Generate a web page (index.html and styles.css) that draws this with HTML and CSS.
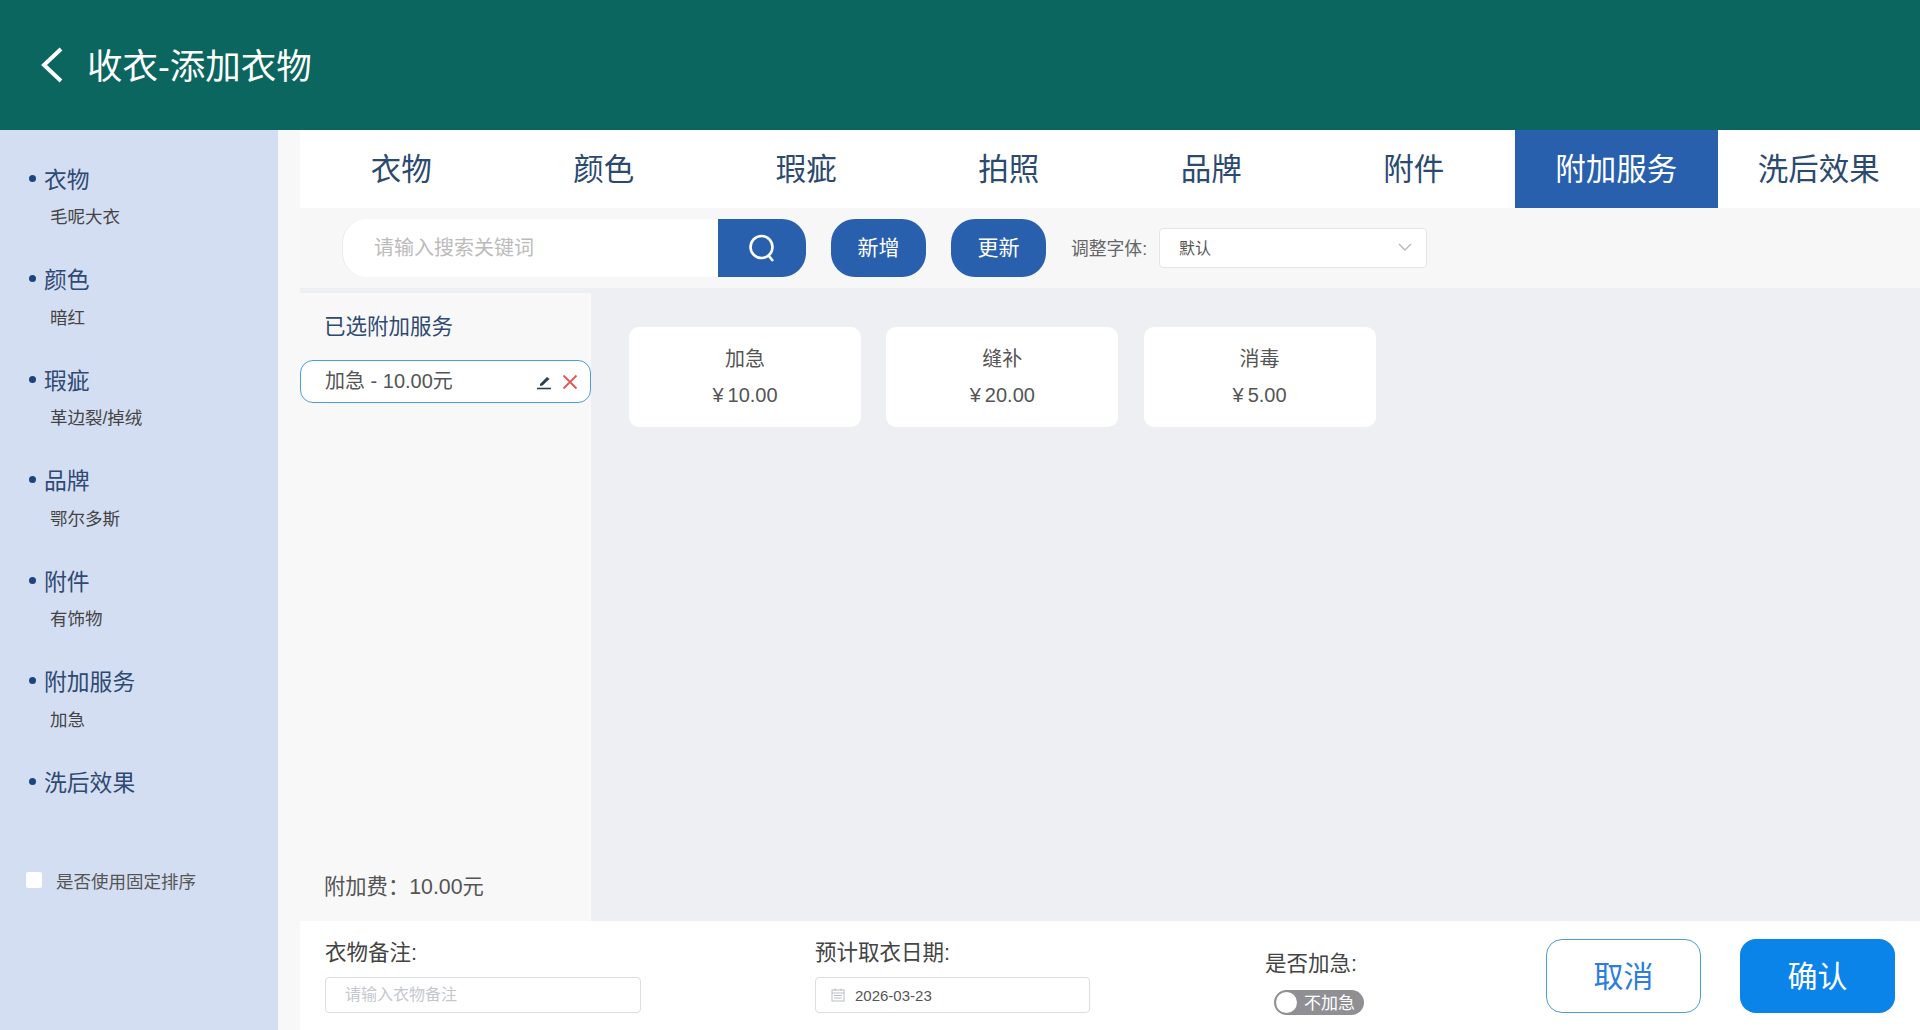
FILE: index.html
```html
<!DOCTYPE html>
<html lang="zh-CN">
<head>
  <meta charset="UTF-8" />
  <meta name="viewport" content="width=device-width, initial-scale=1.0" />
  <title>收衣-添加衣物</title>
  <link rel="stylesheet" href="styles.css">
</head>
<body>
  <header class="topbar">
    <svg class="back-icon" width="24" height="36" viewBox="0 0 24 36"><path d="M21 2 L4 18 L21 34" fill="none" stroke="#fff" stroke-width="4"/></svg>
    <h1 class="page-title">收衣-添加衣物</h1>
  </header>

  <div class="page">
    <aside class="sidebar">
      <div class="step"><div class="step-name">衣物</div><div class="step-value">毛呢大衣</div></div>
      <div class="step"><div class="step-name">颜色</div><div class="step-value">暗红</div></div>
      <div class="step"><div class="step-name">瑕疵</div><div class="step-value">革边裂/掉绒</div></div>
      <div class="step"><div class="step-name">品牌</div><div class="step-value">鄂尔多斯</div></div>
      <div class="step"><div class="step-name">附件</div><div class="step-value">有饰物</div></div>
      <div class="step"><div class="step-name">附加服务</div><div class="step-value">加急</div></div>
      <div class="step"><div class="step-name">洗后效果</div></div>
      <label class="fixed-sort"><span class="fake-check"></span>是否使用固定排序</label>
    </aside>

    <main class="content">
      <nav class="tabs">
        <div class="tab">衣物</div>
        <div class="tab">颜色</div>
        <div class="tab">瑕疵</div>
        <div class="tab">拍照</div>
        <div class="tab">品牌</div>
        <div class="tab">附件</div>
        <div class="tab active">附加服务</div>
        <div class="tab">洗后效果</div>
      </nav>

      <div class="toolbar">
        <div class="search">
          <input class="search-input" type="text" placeholder="请输入搜索关键词" />
          <button class="search-btn">
            <svg width="32" height="32" viewBox="0 0 32 32"><circle cx="15.5" cy="15" r="11" fill="none" stroke="#fff" stroke-width="2.6"/><path d="M22 23 L27 29" stroke="#fff" stroke-width="2.6" fill="none"/></svg>
          </button>
        </div>
        <button class="tool-btn">新增</button>
        <button class="tool-btn">更新</button>
        <span class="font-label">调整字体:</span>
        <div class="font-select">
          <span>默认</span>
          <svg width="14" height="10" viewBox="0 0 14 10"><path d="M1 2 L7 8 L13 2" fill="none" stroke="#b4b8c0" stroke-width="1.4"/></svg>
        </div>
      </div>

      <div class="workspace">
        <section class="selected">
          <div class="selected-title">已选附加服务</div>
          <div class="chip">
            <span class="chip-text">加急 - 10.00元</span>
            <svg class="chip-edit" width="16" height="16" viewBox="0 0 16 16"><path d="M4 10 L11 3 L13.5 5 L6.5 11.5 L4 12 Z" fill="#2c3e50"/><path d="M1 14.5 H15" stroke="#2c3e50" stroke-width="1.6"/></svg>
            <svg class="chip-del" width="16" height="16" viewBox="0 0 16 16"><path d="M1.5 1.5 L14.5 14.5 M14.5 1.5 L1.5 14.5" stroke="#e2575a" stroke-width="1.8" fill="none"/></svg>
          </div>
          <div class="fee">附加费：10.00元</div>
        </section>

        <section class="services">
          <div class="service"><div>加急</div><div class="price"><span class="yen">¥</span>10.00</div></div>
          <div class="service"><div>缝补</div><div class="price"><span class="yen">¥</span>20.00</div></div>
          <div class="service"><div>消毒</div><div class="price"><span class="yen">¥</span>5.00</div></div>
        </section>
      </div>

      <footer class="footer">
        <div class="field field-note">
          <label class="field-label">衣物备注:</label>
          <input class="field-input" type="text" placeholder="请输入衣物备注" />
        </div>
        <div class="field field-date">
          <label class="field-label">预计取衣日期:</label>
          <div class="date-box">
            <svg width="14" height="14" viewBox="0 0 14 14"><rect x="1" y="2" width="12" height="11" fill="none" stroke="#b8bcc4" stroke-width="1"/><path d="M1 5 H13 M3 7.5 H11 M3 10 H11 M4 0.5 V3 M10 0.5 V3" stroke="#b8bcc4" stroke-width="1" fill="none"/></svg>
            <span>2026-03-23</span>
          </div>
        </div>
        <div class="urgent">
          <div class="field-label">是否加急:</div>
          <div class="switch"><span class="knob"></span>不加急</div>
        </div>
        <div class="actions">
          <button class="btn-cancel">取消</button>
          <button class="btn-ok">确认</button>
        </div>
      </footer>
    </main>
  </div>
</body>
</html>
```

FILE: styles.css
```css
* {
  box-sizing: border-box;
}
body {
  margin: 0;
  height: 1030px;
  overflow: hidden;
  display: flex;
  flex-direction: column;
  font-family: "Liberation Sans", "Noto Sans CJK SC", sans-serif;
  color: #444;
  background: #f8f8f9;
}
button {
  font-family: inherit;
  cursor: pointer;
}
input {
  font-family: inherit;
  outline: none;
}

.topbar {
  height: 130px;
  flex: none;
  display: flex;
  align-items: center;
  padding-left: 40px;
  background: #0a665f;
}
.page-title {
  margin: 0 0 4px 23px;
  font-size: 35.5px;
  font-weight: 400;
  color: #fff;
}

.page {
  flex: 1;
  display: flex;
  min-height: 0;
}

.sidebar {
  width: 278px;
  flex: none;
  padding-top: 33px;
  background: #d4def2;
}
.step {
  height: 100.6px;
}
.step-name {
  display: flex;
  align-items: center;
  height: 30px;
  padding-left: 29px;
  font-size: 22.8px;
  color: #2f4a72;
}
.step-name::before {
  content: "";
  width: 7px;
  height: 7px;
  margin-right: 8px;
  border-radius: 50%;
  background: #1c4580;
}
.step-value {
  margin-top: 12px;
  padding-left: 50px;
  font-size: 17.5px;
  line-height: 24px;
  color: #444;
}
.fixed-sort {
  display: flex;
  align-items: center;
  height: 24px;
  margin-top: 1px;
  padding-left: 26px;
  font-size: 17.5px;
  color: #555;
}
.fake-check {
  width: 16px;
  height: 16px;
  margin-right: 14px;
  background: #fff;
  border-radius: 2px;
}

.content {
  flex: 1;
  min-width: 0;
  margin-left: 22px;
  display: flex;
  flex-direction: column;
}

.tabs {
  display: grid;
  grid-template-columns: repeat(8, 1fr);
  height: 78px;
  flex: none;
  background: #fff;
}
.tab {
  display: flex;
  align-items: center;
  justify-content: center;
  padding-bottom: 5px;
  font-size: 30.5px;
  color: #2c4a70;
}
.tab.active {
  background: #2860ae;
  color: #fff;
}

.toolbar {
  height: 80px;
  flex: none;
  display: flex;
  align-items: center;
  padding-left: 42px;
  background: #f7f7f8;
}
.search {
  display: flex;
  width: 464px;
  height: 58px;
}
.search-input {
  flex: 1;
  min-width: 0;
  padding-left: 31px;
  border: none;
  border-left: 1px solid #e8eaee;
  border-radius: 24px 0 0 24px;
  font-size: 20px;
  background: #fff;
}
.search-input::placeholder {
  color: #bbb;
}
.search-btn {
  width: 88px;
  display: flex;
  align-items: center;
  justify-content: center;
  padding: 0;
  border: none;
  border-radius: 0 24px 24px 0;
  background: #2860ae;
}
.tool-btn {
  width: 95px;
  height: 58px;
  margin-left: 25px;
  padding-bottom: 5px;
  border: none;
  border-radius: 24px;
  font-size: 21px;
  color: #fff;
  background: #2860ae;
}
.font-label {
  margin-left: 25px;
  width: 88px;
  padding-bottom: 2px;
  font-size: 17.8px;
  color: #666;
}
.font-select {
  width: 268px;
  height: 40px;
  display: flex;
  align-items: center;
  justify-content: space-between;
  padding: 0 14px 2px 19px;
  border: 1px solid #e3e5ea;
  border-radius: 4px;
  font-size: 16px;
  color: #555;
  background: #fff;
}

.workspace {
  flex: 1;
  min-height: 0;
  display: flex;
  padding-top: 5px;
  background: #eeeff3;
}
.selected {
  width: 291px;
  flex: none;
  display: flex;
  flex-direction: column;
  background: #f8f8f9;
}
.selected-title {
  margin: 20px 0 0 24px;
  height: 28px;
  font-size: 21.5px;
  line-height: 28px;
  color: #2f4a72;
}
.chip {
  display: flex;
  align-items: center;
  height: 43px;
  margin-top: 19px;
  padding: 0 0 0 24px;
  border: 1.5px solid #4a9ee0;
  border-radius: 13px;
  background: #fff;
}
.chip-text {
  flex: 1;
  padding-bottom: 4px;
  font-size: 20px;
  color: #555;
}
.chip-edit {
  margin-right: 10px;
}
.chip-del {
  margin-right: 12px;
}
.fee {
  margin: auto 0 19px 24px;
  font-size: 21.3px;
  line-height: 30px;
  color: #555;
}

.services {
  flex: 1;
  display: flex;
  align-items: flex-start;
  gap: 25.3px;
  padding: 34px 0 0 38px;
}
.service {
  width: 232px;
  height: 100px;
  padding-top: 17px;
  border-radius: 10px;
  text-align: center;
  font-size: 20px;
  line-height: 30px;
  color: #555;
  background: #fff;
}
.price {
  margin-top: 6px;
}
.yen {
  margin-right: 4px;
}

.footer {
  height: 109px;
  flex: none;
  display: flex;
  padding: 0 25px;
  background: #fff;
}
.field {
  display: flex;
  flex-direction: column;
  padding-top: 17px;
}
.field-note {
  width: 316px;
}
.field-date {
  width: 275px;
  margin-left: 174px;
}
.field-label {
  font-size: 21.5px;
  line-height: 30px;
  color: #444;
}
.field-input {
  height: 36px;
  margin-top: 9px;
  padding-left: 19px;
  border: 1px solid #dcdee2;
  border-radius: 4px;
  font-size: 16px;
}
.field-input::placeholder {
  color: #c5c8ce;
}
.date-box {
  display: flex;
  align-items: center;
  gap: 10px;
  height: 36px;
  margin-top: 9px;
  padding-left: 15px;
  border: 1px solid #dcdee2;
  border-radius: 4px;
  font-size: 15px;
  color: #555;
}
.urgent {
  margin-left: 175px;
  padding-top: 28px;
}
.switch {
  display: flex;
  align-items: center;
  width: 90px;
  height: 25px;
  margin: 11px 0 0 9px;
  padding: 0 0 2px 2px;
  border-radius: 13px;
  font-size: 17px;
  color: #fff;
  background: #909094;
}
.knob {
  width: 21px;
  height: 21px;
  margin: 2px 7px 0 0;
  border-radius: 50%;
  background: #fff;
}
.actions {
  margin-left: auto;
  display: flex;
  gap: 39px;
  padding-top: 18px;
}
.actions button {
  width: 155px;
  height: 74px;
  padding-bottom: 6px;
  border-radius: 16px;
  font-size: 30px;
}
.btn-cancel {
  border: 1.5px solid #4a9ee0;
  color: #2b7de0;
  background: #fff;
}
.btn-ok {
  border: none;
  color: #fff;
  background: #0a84e8;
}
```
